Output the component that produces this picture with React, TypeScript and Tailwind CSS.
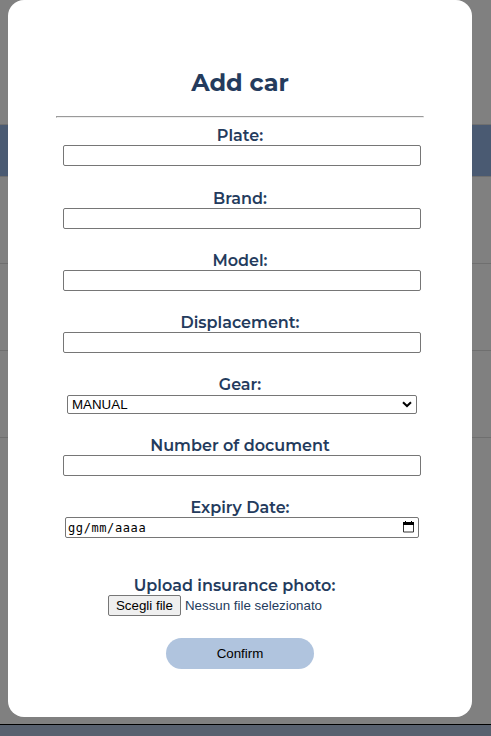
import React from "react";

type FieldProps = {
  label: string;
  className: string;
  children?: React.ReactNode;
};

const labelFont = "block whitespace-nowrap pt-px font-['Montserrat','Inter',sans-serif] text-base font-semibold leading-[19px] text-[#243b5d]";
const inputBox = "block h-[21px] w-[358px] rounded-[2px] border border-[#767676] bg-white px-0.5 text-[13.33px] outline-none";

function Field({ label, className, children }: FieldProps) {
  return (
    <div className={`flex flex-col items-center ${className}`}>
      <label className={labelFont}>{label}</label>
      <div className="relative left-0.5 flex">
        {children ?? <input type="text" aria-label={label} className={inputBox} />}
      </div>
    </div>
  );
}

function Backdrop() {
  return (
    <div className="flex h-[736px] flex-col bg-[#808080]">
      <div className="h-[124px]" />
      <div className="h-[53px] border-y border-[#6f6f6f] bg-[#4a5a72]" />
      <div className="h-[87px] border-b border-[#6f6f6f]" />
      <div className="h-[87px] border-b border-[#6f6f6f]" />
      <div className="h-[87px] border-b border-[#6f6f6f]" />
      <div className="grow" />
      <div className="h-3 border-t border-black bg-[#58616f]" />
    </div>
  );
}

export default function App() {
  return (
    <div className="relative h-[736px] w-[491px] overflow-hidden">
      <Backdrop />
      <div className="absolute left-2 top-0 flex h-[717px] w-[464px] flex-col items-center rounded-2xl bg-white px-12 pt-[68px] font-['Liberation_Sans',Arial,sans-serif]">
        <h1 className="whitespace-nowrap font-['Montserrat','Inter',sans-serif] text-2xl font-bold leading-[29px] text-[#243b5d]">Add car</h1>
        <div className="mt-[19px] h-0.5 w-[368px] border border-b-[#eeeeee] border-l-[#9a9a9a] border-r-[#eeeeee] border-t-[#9a9a9a]" />
        <Field label="Plate:" className="mt-[7px]" />
        <Field label="Brand:" className="mt-[22px]" />
        <Field label="Model:" className="mt-[21px]" />
        <Field label="Displacement:" className="mt-[21px]" />
        <Field label="Gear:" className="mt-[21px]">
          <div className="mt-px flex h-[19px] w-[350px] items-center justify-between rounded-[2px] border border-[#767676] pl-1 pr-1 text-[13.33px] leading-[17px] text-black">
            <span>MANUAL</span>
            <svg width="10" height="7" viewBox="0 0 10 7" fill="none">
              <path d="M1 1.2 5 5 9 1.2" stroke="black" strokeWidth="2" />
            </svg>
          </div>
        </Field>
        <Field label="Number of document" className="mt-[21px]" />
        <Field label="Expiry Date:" className="mt-[21px]">
          <div className="flex h-[21px] w-[354px] items-start justify-between rounded-[2px] border border-[#767676] pl-0.5 pr-1 text-black">
            <span className="pt-px font-['DejaVu_Sans_Mono',monospace] text-[12px] leading-[18px] tracking-[0.6px]">gg/mm/aaaa</span>
            <svg className="mt-[3px]" width="11" height="12" viewBox="0 0 11 12" fill="none">
              <path d="M0.5 1.5h10v9.5h-10z" stroke="#333" />
              <path d="M0 1h11v3H0zM2 0h1v1H2zM8 0h1v1H8z" fill="black" />
            </svg>
          </div>
        </Field>
        <div className="mt-[37px] flex flex-col items-center">
          <label className={`${labelFont} relative -left-[5.5px]`}>Upload insurance photo:</label>
          <div className="relative -left-[25px] flex items-center gap-1 text-[13.33px]">
            <button className="h-[21px] w-[73px] whitespace-nowrap rounded-[2px] border border-[#767676] bg-[#efefef] leading-[19px] text-black">Scegli file</button>
            <span className="whitespace-nowrap leading-[21px] text-[#243b5d]">Nessun file selezionato</span>
          </div>
        </div>
        <button className="mt-[22px] h-[31px] w-[148px] rounded-full bg-[#b0c4de] text-[13.33px] leading-[31px] text-black">Confirm</button>
      </div>
    </div>
  );
}
